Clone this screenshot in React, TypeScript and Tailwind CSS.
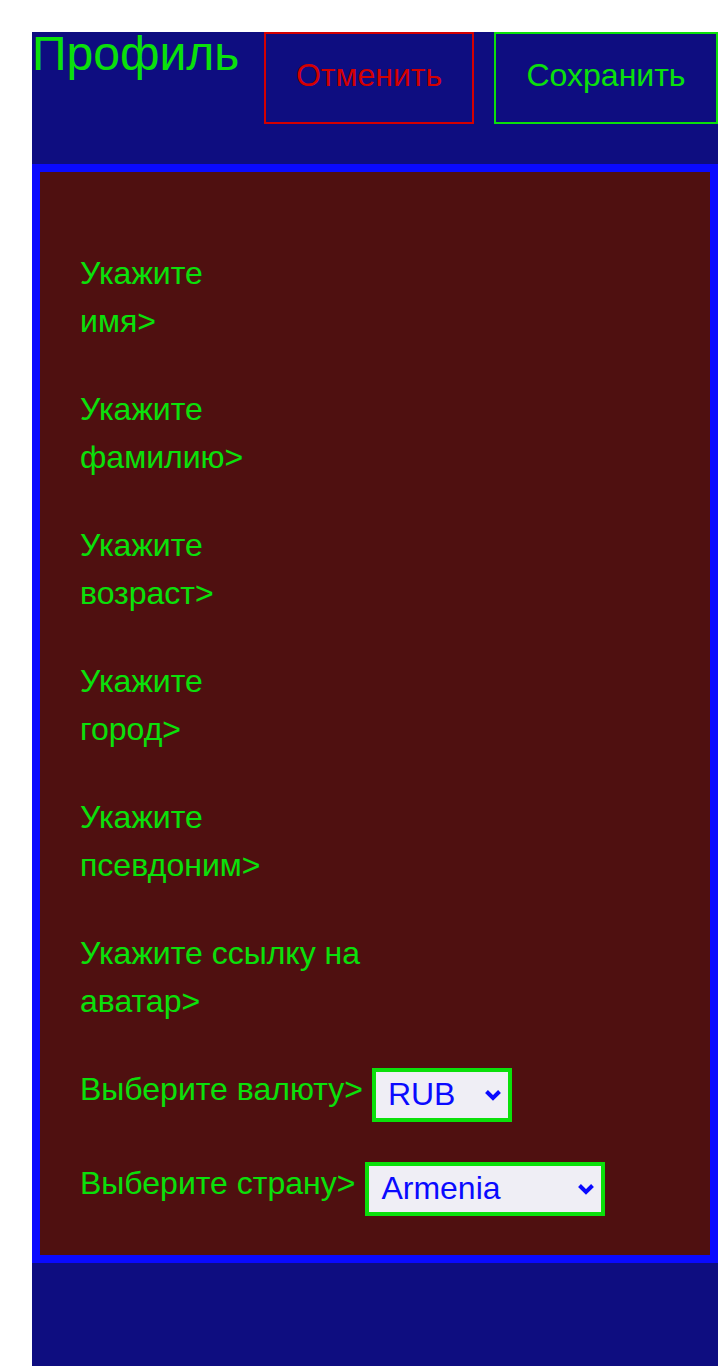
import React from "react";

const labelRows: [string, string][] = [
  ["Укажите", "имя>"],
  ["Укажите", "фамилию>"],
  ["Укажите", "возраст>"],
  ["Укажите", "город>"],
  ["Укажите", "псевдоним>"],
  ["Укажите ссылку на", "аватар>"],
];

function Chevron() {
  return (
    <svg
      width="18"
      height="12"
      viewBox="0 0 18 12"
      className="pointer-events-none absolute right-[10px] top-1/2 -translate-y-1/2"
    >
      <polyline
        points="2.5,2.5 9,9 15.5,2.5"
        fill="none"
        stroke="#0a0aff"
        strokeWidth="4"
        strokeLinecap="butt"
        strokeLinejoin="miter"
      />
    </svg>
  );
}

export default function App() {
  return (
    <div
      className="bg-white pt-[32px] pl-[32px] min-h-[1366px]"
      style={{ fontFamily: '"Liberation Sans", Arial, sans-serif' }}
    >
      <div className="bg-[#0e0d80] w-[686px] min-h-[1334px]">
        <header className="flex items-start">
          <h1 className="w-[232px] shrink-0 text-[48px] leading-[44px] text-[#0be00b] font-normal">
            Профиль
          </h1>
          <button className="w-[210px] h-[92px] shrink-0 border-2 border-[#d40000] text-[#d40000] text-[32px] leading-[37px] pt-[23px] flex justify-center items-start">
            Отменить
          </button>
          <button className="ml-[20px] w-[224px] h-[92px] shrink-0 border-2 border-[#0be00b] text-[#0be00b] text-[32px] leading-[37px] pt-[23px] flex justify-center items-start">
            Сохранить
          </button>
        </header>

        <section className="mt-[40px] border-8 border-[#0a0aff] bg-[#4f1010] pt-[77px] pl-[40px] pb-[39px] text-[#0be00b] text-[32px] leading-[48px]">
          {labelRows.map(([a, b], i) => (
            <div key={i} className={i === 0 ? "" : "mt-[40px]"}>
              <div>{a}</div>
              <div>{b}</div>
            </div>
          ))}

          <div className="mt-[43px] flex items-start">
            <span className="-mt-[3px] whitespace-nowrap">{"Выберите валюту>"}</span>
            <div className="relative ml-[9px] w-[140px] h-[54px]">
              <select
                defaultValue="RUB"
                className="appearance-none w-full h-full border-4 border-[#0be00b] bg-[#efeef5] text-[#0a0aff] text-[32px] leading-[42px] pl-[12px] pb-[3px]"
              >
                <option value="RUB">RUB</option>
                <option value="USD">USD</option>
                <option value="EUR">EUR</option>
              </select>
              <Chevron />
            </div>
          </div>

          <div className="mt-[40px] flex items-start">
            <span className="-mt-[3px] whitespace-nowrap">{"Выберите страну>"}</span>
            <div className="relative ml-[10px] w-[240px] h-[54px]">
              <select
                defaultValue="Armenia"
                className="appearance-none w-full h-full border-4 border-[#0be00b] bg-[#efeef5] text-[#0a0aff] text-[32px] leading-[42px] pl-[12px] pb-[2px]"
              >
                <option value="Armenia">Armenia</option>
                <option value="Russia">Russia</option>
                <option value="Georgia">Georgia</option>
              </select>
              <Chevron />
            </div>
          </div>
        </section>
      </div>
    </div>
  );
}
